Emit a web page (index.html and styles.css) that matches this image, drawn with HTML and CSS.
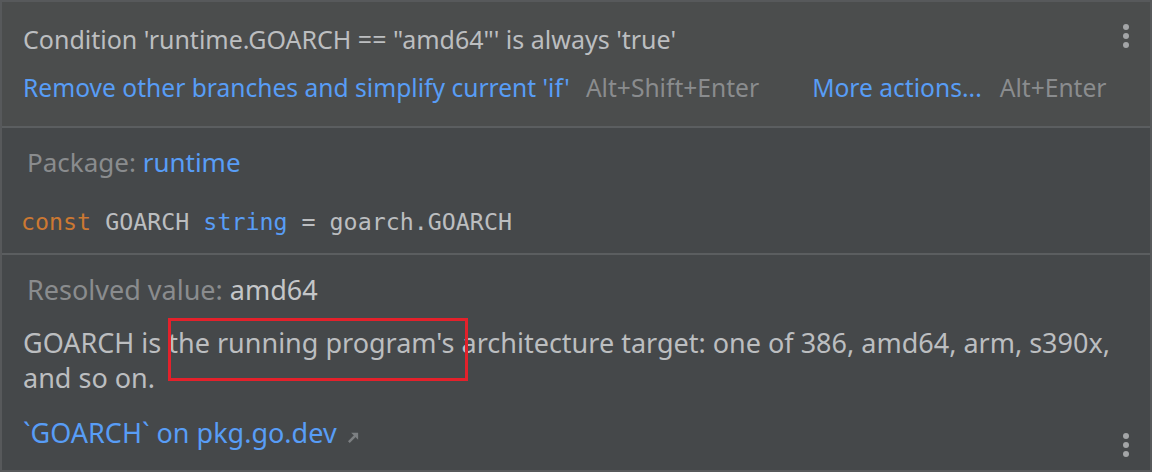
FILE: index.html
```html
<!DOCTYPE html>
<html>
<head>
<meta charset="utf-8">
<link rel="stylesheet" href="styles.css">
</head>
<body>
<div class="popup">
  <section class="sec sec-problem">
    <div class="row title-row">
      <span class="title">Condition 'runtime.GOARCH == "amd64"' is always 'true'</span>
      <svg class="kebab" width="6" height="24" viewBox="0 0 6 24"><circle cx="3" cy="3" r="3"/><circle cx="3" cy="12" r="3"/><circle cx="3" cy="21" r="3"/></svg>
    </div>
    <div class="row actions">
      <span class="link">Remove other branches and simplify current 'if'</span>
      <span class="shortcut s1">Alt+Shift+Enter</span>
      <span class="link more">More actions...</span>
      <span class="shortcut s2">Alt+Enter</span>
    </div>
  </section>
  <section class="sec sec-def">
    <div class="pkg"><span class="label">Package:</span> <span class="link">runtime</span></div>
    <div class="code"><span class="kw">const</span> GOARCH <span class="type">string</span> = goarch.GOARCH</div>
  </section>
  <section class="sec sec-doc">
    <div class="resolved"><span class="label">Resolved value:</span> <span class="val">amd64</span></div>
    <p class="para">GOARCH is the running program's architecture target: one of 386, amd64, arm, s390x, and so on.<span class="mark"></span></p>
    <div class="row foot">
      <span class="link">`GOARCH` on pkg.go.dev<svg class="ext" width="13" height="13" viewBox="0 0 14 14"><path d="M2 12 L10 4" stroke-width="2.6"/><path d="M4.5 2 H12 V9.5 Z" stroke="none"/></svg></span>
      <svg class="kebab kebab-bottom" width="6" height="24" viewBox="0 0 6 24"><circle cx="3" cy="3" r="3"/><circle cx="3" cy="12" r="3"/><circle cx="3" cy="21" r="3"/></svg>
    </div>
  </section>
</div>
</body>
</html>
```
FILE: styles.css
```css
html, body {
  margin: 0;
  padding: 0;
  background: #45484a;
}
body {
  width: 1152px;
  height: 472px;
  overflow: hidden;
  font-family: "Noto Sans", "Open Sans", sans-serif;
  font-size: 24.6px;
  color: #bcbec0;
}
.popup {
  box-sizing: border-box;
  width: 1152px;
  height: 472px;
  border: 2px solid #57595b;
  display: flex;
  flex-direction: column;
}
.sec {
  box-sizing: border-box;
}
.sec + .sec {
  border-top: 2px solid #5b5e60;
}
.sec-problem {
  background: #4b4d4d;
  height: 124px;
  padding: 22px 21px 0 21px;
}
.sec-def {
  height: 127px;
  padding: 19px 21px 0 21px;
  font-size: 26px;
}
.sec-doc {
  flex: 1;
  padding: 20px 21px 0 21px;
  font-size: 27px;
}
.row {
  display: flex;
  align-items: center;
}
.title-row {
  justify-content: space-between;
  height: 30px;
  line-height: 30px;
}
.title {
  font-size: 25px;
}
.kebab {
  fill: #a3a5a7;
  flex: none;
  margin-top: -6px;
}
.actions {
  margin-top: 19px;
  height: 30px;
  line-height: 30px;
  white-space: nowrap;
}
.link { color: #589df6; }
.shortcut { color: #8a8c8e; }
.s1 { margin-left: 16px; }
.more { margin-left: 53px; }
.s2 { margin-left: 18px; }
.pkg {
  line-height: 30px;
  padding-left: 4px;
}
.label { color: #8a8c8e; }
.code {
  margin-top: 30px;
  margin-left: -2px;
  line-height: 30px;
  font-family: "DejaVu Sans Mono", "Liberation Mono", monospace;
  font-size: 23.3px;
  color: #bcbec0;
}
.kw { color: #cc7832; }
.type { color: #589df6; }
.resolved {
  line-height: 30px;
  padding-left: 4px;
}
.val { color: #c4c6c8; }
.para {
  margin: 20px 0 0 0;
  line-height: 35px;
  position: relative;
}
.mark {
  position: absolute;
  left: 145px;
  top: -7px;
  width: 300px;
  height: 63px;
  box-sizing: border-box;
  border: 3px solid #e3212b;
}
.foot {
  margin-top: 23px;
  height: 30px;
  line-height: 30px;
  justify-content: space-between;
}
.ext {
  fill: #7c7f82;
  stroke: #7c7f82;
  vertical-align: -1px;
  margin-left: 10px;
}
.kebab-bottom {
  margin-top: 24px;
}
```
